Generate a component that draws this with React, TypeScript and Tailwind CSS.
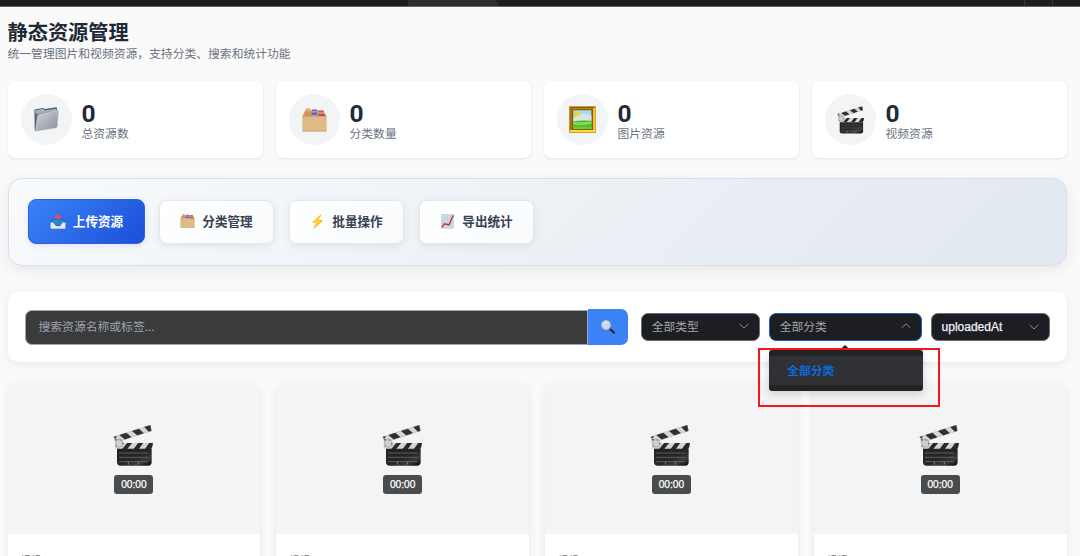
import type { ReactNode } from "react";

type IconProps = { className?: string };

function Clapper({ className }: IconProps) {
  return (
    <svg viewBox="0 0 120 123" className={className}>
      <defs>
        <linearGradient id="slate" x1="0" y1="0" x2="1" y2="1">
          <stop offset="0" stopColor="#222" />
          <stop offset=".55" stopColor="#262626" />
          <stop offset=".75" stopColor="#3c3a3a" />
          <stop offset="1" stopColor="#080808" />
        </linearGradient>
        <clipPath id="upperStick">
          <path d="M1 35 110 0q3 0 3 3l3 15L8 53z" />
        </clipPath>
        <clipPath id="lowerStick">
          <path d="M8 53h112l-3 19H8z" />
        </clipPath>
      </defs>
      <g clipPath="url(#upperStick)">
        <path d="M0 0h120v60H0z" fill="#d6d6d6" />
        <path d="M18 29 38 22 56 37 36 44zM56 17 76 10 93 25 74 32zM93 5 113-1 122 18 108 21z" fill="#303030" />
        <path d="M0 36 12 31 8 42z" fill="#333" />
        <path d="M1 35 110 0q3 0 3 3l3 15L8 53z" fill="none" stroke="#a9a9a9" strokeWidth="2" />
      </g>
      <path d="M5 40 18 39 33 53 26 70H6z" fill="#d0d0d0" />
      <g clipPath="url(#lowerStick)">
        <path d="M8 53h112v20H8z" fill="#d4d4d4" />
        <path d="M43 53h15L42 73H27zM76 53h15L77 73H61zM109 53h18l-14 20H95z" fill="#292929" />
      </g>
      <circle cx="19" cy="55" r="12" fill="#cfcfcf" stroke="#a0a0a0" strokeWidth="2" />
      <g fill="#444">
        <circle cx="9" cy="44" r="2.5" />
        <circle cx="22" cy="45" r="1.8" />
        <circle cx="29" cy="56" r="1.8" />
        <circle cx="10" cy="63" r="1.8" />
      </g>
      <path d="M12 71h104v40q0 11-11 11H23q-11 0-11-11z" fill="url(#slate)" />
      <g stroke="#666" strokeWidth="2.6">
        <path d="M18 84h88M18 97h88M18 110h88" />
        <path d="M46 110v9M76 110v9" stroke="#888" />
      </g>
    </svg>
  );
}

function Folder({ className }: IconProps) {
  return (
    <svg viewBox="0 0 76 74" className={className}>
      <defs>
        <linearGradient id="folderFront" x1="0" y1="0" x2="1" y2="1">
          <stop offset="0" stopColor="#d2d5dc" />
          <stop offset=".5" stopColor="#adb1bb" />
          <stop offset="1" stopColor="#868b96" />
        </linearGradient>
      </defs>
      <path d="M1 10q0-3 3-4l24-4q3 0 4 3l35-5q3 0 3 3v18L6 73q-4 0-4-5z" fill="#566b78" />
      <path d="M3 10 28 4l4 6 35-5v5L6 21z" fill="#a3b4bb" />
      <path d="M11 27q0-4 5-5l55-13q4-1 4 3l-4 47q0 3-4 4L9 73q-4 1-4-3z" fill="url(#folderFront)" stroke="#dce0e4" strokeWidth="1.5" />
    </svg>
  );
}

function Dividers({ className }: IconProps) {
  return (
    <svg viewBox="0 0 76 72" className={className}>
      <path d="M11 7h53l11 18H1z" fill="#b99b77" />
      <path d="M13 1h11l3 6H10z" fill="#f49b45" />
      <path d="M10 8h18l2 4H7z" fill="#c2a27d" />
      <path d="M9 11h16l3 6H5z" fill="#f58c35" />
      <path d="M31 4h14l2 5H29z" fill="#5963f2" />
      <path d="M30 14h16v5H29z" fill="#4a4cf0" />
      <path d="M50 7h15l2 5H50z" fill="#f04b46" />
      <path d="M51 18h17l3 6H51z" fill="#f2353e" />
      <path d="M1 24h74v44q0 3-3 3H4q-3 0-3-3z" fill="#dfba87" />
      <path d="M1 24h74v3H1z" fill="#c8a87f" />
      <path d="M2 68h72v3H2z" fill="#d5ae78" />
    </svg>
  );
}

function Painting({ className }: IconProps) {
  return (
    <svg viewBox="0 0 82 82" className={className}>
      <path d="M0 0h82v82H0z" fill="#d6a21c" />
      <path d="M3 3h76v4H3z" fill="#81591a" />
      <path d="M2 2l10 8v62l-10 8z" fill="#a87112" />
      <path d="M80 2l-8 8v62l8 8z" fill="#efc43a" />
      <path d="M3 73h76v6H3z" fill="#ffdb3f" />
      <path d="M9 9h64v64H9z" fill="#8a5b10" />
      <path d="M13 13h55v57H13z" fill="#a4ddec" />
      <path d="M13 36q11-9 19-5 10-16 20-4 9-5 16 3v16H13z" fill="#dbe2e5" />
      <circle cx="24" cy="23" r="8" fill="#f7d22d" />
      <path d="M13 46q25-4 55-1v25H13z" fill="#45b92d" />
      <path d="M13 47q24 4 55 0v7q-30 8-55 2z" fill="#8cd64b" />
      <path d="M13 62h55v8H13z" fill="#67c933" />
    </svg>
  );
}

function Outbox({ className }: IconProps) {
  return (
    <svg viewBox="0 0 48 46" className={className}>
      <path d="M6 17h36l5 15v11q0 2-2 2H3q-2 0-2-2V32z" fill="#174f75" />
      <path d="M7 18h34l3 15H4z" fill="#2b8fd8" />
      <path d="M1 26h8l8 9q7 5 14 0l8-9h8v17q0 2-2 2H3q-2 0-2-2z" fill="#e5e8ea" />
      <path d="M9 20h30q-3 15-15 16T9 20z" fill="#2588cd" />
      <path d="M24 0 35 10q0 2-3 2h-4v4h-8v-4h-4q-3 0-3-2z" fill="#f04b48" />
    </svg>
  );
}

function Bolt({ className }: IconProps) {
  return (
    <svg viewBox="0 0 34 46" className={className}>
      <path d="M27 1 1 24q-1 2 2 2l9 1L5 44q0 2 2 1l26-24q1-2-2-2l-11-1 9-16q0-2-2-1z" fill="#fdb813" />
      <path d="M26 3 3 24l12 1-7 16 18-21-12 1z" fill="#ffd44a" />
    </svg>
  );
}

function TrendChart({ className }: IconProps) {
  return (
    <svg viewBox="0 0 40 46" className={className}>
      <path d="M0 0h40v45H0z" fill="#cfd9e1" />
      <path d="M0 9h40M0 18h40M0 27h40M0 36h40M10 0v45M20 0v45M30 0v45" stroke="#b8c7d2" strokeWidth="1" />
      <path d="M3 41 10 30l5 1 10 2 7-17 6-12" fill="none" stroke="#d0202c" strokeWidth="4" strokeLinejoin="round" />
    </svg>
  );
}

function Magnifier({ className }: IconProps) {
  return (
    <svg viewBox="0 0 42 42" className={className}>
      <path d="m27 27 12 11" stroke="#222" strokeWidth="6" strokeLinecap="round" />
      <path d="m23 23 5 5" stroke="#777" strokeWidth="4" />
      <circle cx="15" cy="15" r="12.5" fill="#c5dcf6" stroke="#c9c8c6" strokeWidth="4" />
      <path d="M6 14q2-8 10-8" fill="none" stroke="#eaf4ff" strokeWidth="3" />
    </svg>
  );
}

function Chevron({ up = false }: { up?: boolean }) {
  return (
    <svg viewBox="0 0 10 6" className="h-[6px] w-[10px] shrink-0" fill="none" stroke="#a3a6ad" strokeWidth=".8">
      <path d={up ? "M.5 5 5 .8 9.5 5" : "M.5 .8 5 5 9.5 .8"} />
    </svg>
  );
}

const stats = [
  { label: "总资源数", icon: <Folder className="h-[25px] w-[25px]" /> },
  { label: "分类数量", icon: <Dividers className="h-6 w-[25px]" /> },
  { label: "图片资源", icon: <Painting className="h-[27px] w-[27px]" /> },
  { label: "视频资源", icon: <Clapper className="mt-px h-[28px] w-[27px]" /> },
];

function StatCard({ label, icon }: { label: string; icon: ReactNode }) {
  return (
    <div className="flex h-[77px] items-center gap-[10px] rounded-[7px] bg-white px-[13px] shadow-[0_1px_3px_rgba(0,0,0,0.1)]">
      <div className="flex size-[51px] items-center justify-center rounded-full bg-[#f3f4f6]">{icon}</div>
      <div className="pt-[3px]">
        <div className="font-['Roboto'] text-[24.5px] leading-[24px] font-bold text-[#1f2937]">0</div>
        <div className="text-[11.8px] leading-[14px] text-[#6b7280]">{label}</div>
      </div>
    </div>
  );
}

function ActionButton({ label, icon }: { label: string; icon: ReactNode }) {
  return (
    <button className="flex h-[44px] w-[115px] items-center justify-center gap-[7px] rounded-[8px] border border-[#e5e7eb] bg-linear-135 from-white to-[#f8fafc] pb-px text-[12.6px] font-bold text-[#374151] shadow-[0_2px_7px_rgba(0,0,0,0.08)]">
      {icon}
      {label}
    </button>
  );
}

function MediaCard() {
  return (
    <div className="h-[220px] overflow-hidden rounded-[10px] bg-white shadow-[0_2px_8px_rgba(0,0,0,0.08)]">
      <div className="flex h-[152px] flex-col items-center bg-[#f3f4f6] pt-[43px]">
        <Clapper className="-ml-[2px] h-[41px] w-10" />
        <div className="mt-[9px] flex h-[19px] w-[39px] items-center justify-center rounded-[3px] bg-[#4a4c4c] font-['Liberation_Sans'] text-[10.2px] text-white [-webkit-text-stroke:0.25px_white]">
          00:00
        </div>
      </div>
      <div className="px-[13px] pt-[18px] text-[10px] leading-[16px] text-[#6b7280]">视频</div>
    </div>
  );
}

export default function App() {
  return (
    <div className="h-[556px] w-[1080px] overflow-hidden bg-[#fafafa] font-['Noto_Sans_CJK_SC',sans-serif]">
      <header className="flex h-[7px] border-b border-[#696368] bg-[#1d1e22]">
        <div className="ml-[407px] w-[92px] bg-[#2e2f32] [clip-path:polygon(0_100%,2px_0,calc(100%-3px)_0,100%_100%)]" />
        <div className="ml-[525px] w-[29px] border-x border-[#35363a]" />
      </header>

      <main className="pr-[13.5px] pl-[7.5px]">
        <div className="h-[74px] pt-[11px]">
          <h1 className="text-[20.2px] leading-[27px] font-bold text-[#1f2937]">静态资源管理</h1>
          <p className="text-[11.8px] leading-[16px] text-[#6b7280]">统一管理图片和视频资源，支持分类、搜索和统计功能</p>
        </div>

        <section className="grid grid-cols-4 gap-[13px]">
          {stats.map((item) => (
            <StatCard key={item.label} {...item} />
          ))}
        </section>

        <section className="mt-5 flex h-[88px] items-center gap-[15px] rounded-[14px] border border-[#d6e0eb] bg-linear-135 from-[#f8fafc] to-[#e2e8f0] px-[19.5px] pb-px shadow-[0_4px_16px_rgba(0,0,0,0.08)]">
          <button className="flex h-[45px] w-[117px] items-center justify-center gap-[7px] rounded-[8px] border border-[#2563eb] bg-linear-135 from-[#3b82f6] to-[#1d4ed8] text-[12.6px] font-bold text-white shadow-[0_2px_7px_rgba(0,0,0,0.08)]">
            <Outbox className="h-[15px] w-4" />
            上传资源
          </button>
          <div className="-ml-px flex gap-[15px]">
            <ActionButton label="分类管理" icon={<Dividers className="h-[14px] w-[15px]" />} />
            <ActionButton label="批量操作" icon={<Bolt className="mx-[2px] h-[15px] w-[11px]" />} />
            <ActionButton label="导出统计" icon={<TrendChart className="mx-px h-[15px] w-[13px]" />} />
          </div>
        </section>

        <section className="mt-[26px] flex h-[70px] items-center rounded-[10px] bg-white px-[17px] shadow-[0_2px_8px_rgba(0,0,0,0.08)]">
          <div className="flex h-[35px] w-[563.5px] items-center rounded-l-[7px] border border-[#a3a7ad] bg-[#3b3b3b] pb-[2px] pl-[13px] text-[11.8px] text-[#9ca3af]">
            搜索资源名称或标签...
          </div>
          <button className="flex h-9 w-10 items-center justify-center rounded-r-[7px] bg-[#3b82f6]">
            <Magnifier className="h-[14px] w-[14px]" />
          </button>
          <div className="ml-[13px] flex h-7 w-[119px] items-center justify-between rounded-[7px] border border-[#6c6e72] bg-[#1d1e24] px-[10px] pb-[2px] text-[11.8px] text-[#a3a6ad]">
            全部类型
            <Chevron />
          </div>
          <div className="relative ml-[9px] flex h-7 w-[153px] items-center justify-between rounded-[7px] border border-[#1764c5] bg-[#1d1e24] px-[10px] pb-[2px] text-[11.8px] text-[#a3a6ad]">
            全部分类
            <Chevron up />
            <div className="absolute top-[36px] -left-px z-10 h-[41px] w-[154px] rounded-[3px] bg-[#222324] py-[6px] shadow-[0_3px_8px_rgba(0,0,0,0.15)]">
              <svg viewBox="0 0 10 6" className="absolute -top-[5px] left-[71px] h-[6px] w-[10px] fill-[#222324]">
                <path d="M0 5 4 .7Q5 0 6 .7L10 5v1H0z" />
              </svg>
              <div className="flex h-[29px] items-center bg-[#303134] pb-px pl-[18.5px] text-[11.8px] font-bold text-[#0b6bde]">
                全部分类
              </div>
            </div>
            <div className="absolute top-[34px] -left-[12px] z-20 h-[59px] w-[182px] border-2 border-[#f7141d]" />
          </div>
          <div className="ml-[9px] flex h-7 w-[119px] items-center justify-between rounded-[7px] border border-[#6c6e72] bg-[#1d1e24] px-[10px] font-['Liberation_Sans'] text-[12px] text-[#f1f3f7] [-webkit-text-stroke:0.25px_#f1f3f7]">
            uploadedAt
            <Chevron />
          </div>
        </section>

        <section className="mt-5 grid grid-cols-4 gap-4">
          <MediaCard />
          <MediaCard />
          <MediaCard />
          <MediaCard />
        </section>
      </main>
    </div>
  );
}
